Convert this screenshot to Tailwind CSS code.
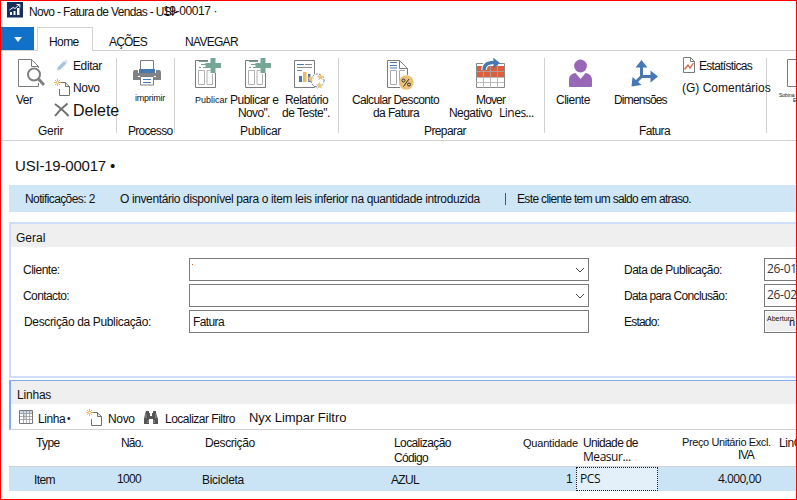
<!DOCTYPE html>
<html lang="pt">
<head>
<meta charset="utf-8">
<title>Novo - Fatura de Vendas</title>
<script src="https://cdn.jsdelivr.net/npm/@tailwindcss/browser@4"></script>
</head>
<body class="bg-white">
<svg width="0" height="0" class="hidden">
  <defs>
    <g id="post">
      <path d="M208 59.5H195.500V86.500H215.500V72" fill="none" stroke="#7c7c7c"/>
      <path d="M198.500 69.500h6v14h-6zM212.500 73v10.500h-5.500v-14h3" fill="none" stroke="#b0b0b0"/>
      <path d="M199 60.500h9M201 63.500h6M199 66.500h2M203 66.500h5" stroke="#6fa593"/>
      <path d="M210.500 57h5v5h5.500v5h-5.500v5h-5v-5h-5v-5h5z" fill="#74a795"/>
    </g>
    <g id="newdoc">
      <path d="M6 4.500H12L16.500 8.500V17.500H6.500V11M12.500 4.500V8.500H16.500" fill="none" stroke="#707070"/>
      <path d="M4.500 1v7M1 4.500h7M2 2l5 5M7 2L2 7" stroke="#e8a850" stroke-width=".9"/>
      <rect x="3.500" y="3.500" width="2" height="2" fill="#fff"/>
    </g>
    <path id="star" d="M0-3.800L1-1.200L3.700-1.100L1.600.6L2.300 3.200L0 1.700L-2.300 3.200L-1.600.6L-3.700-1.100L-1-1.200z" fill="#ebc178"/>
  </defs>
</svg>
<div class="flex h-[500px] w-[797px] flex-col overflow-hidden border border-[#ff0000] bg-white font-['Liberation_Sans',Arial,sans-serif] text-[12px] leading-[14px] whitespace-nowrap text-[#111]">

  <!-- title bar -->
  <header class="flex h-[26px] shrink-0 pl-[6px]">
    <svg class="mt-[1px] h-[16px] w-[16px] shrink-0" viewBox="0 0 16 16"><rect width="16" height="15.500" fill="#17305b"/><path d="M3 10h2v3H3zM6.500 9h2v4h-2zM10 6h2.500v7H10z" fill="#fff"/><path d="M2.500 8L6 5.500L8 6.500L12 3M9.500 2.500H12.800V5.500" fill="none" stroke="#fff"/></svg>
    <span class="mt-[4px] ml-[6px] w-[134px] tracking-[-0.67px]">Novo - Fatura de Vendas - USI-</span>
    <span class="mt-[3px] tracking-[-0.4px]">19-00017 ·</span>
  </header>

  <!-- tabs -->
  <nav class="flex h-[24px] shrink-0 border-b border-[#d2d2d2]">
    <div class="flex h-[23px] w-[33px] justify-center bg-[#1170c8] pt-[10px]"><svg class="h-[5px] w-[8px]" viewBox="0 0 8 5"><path d="M0 0h8L4 5z" fill="#e8f4ff"/></svg></div>
    <div class="ml-[3px] h-[24px] w-[56px] border-x border-t border-[#d2d2d2] bg-white pt-[7px] pl-[11px] tracking-[-0.6px]">Home</div>
    <div class="mt-[8px] ml-[16px] w-[76px] tracking-[-0.8px]">AÇÕES</div>
    <div class="mt-[8px] tracking-[-0.7px]">NAVEGAR</div>
  </nav>

  <!-- ribbon -->
  <section class="flex h-[90px] shrink-0 border-b border-[#d2d2d2] pt-[7px]">
    <div class="flex h-[75px] w-[116px] shrink-0 flex-col border-r border-[#d2d2d2]">
      <div class="flex h-[66px] shrink-0">
        <div class="w-[52px] shrink-0 pl-[15px]">
          <svg class="h-[30px] w-[30px]" viewBox="16 58 30 30"><path d="M38.500 68V66.500L31.500 59.500H18.500V86.500H38.500V83M31.500 59.500V66.500H38.500" fill="none" stroke="#7c7c7c"/><circle cx="34" cy="74.500" r="6" fill="#fff" stroke="#808080" stroke-width="2"/><path d="M38.500 79L44 85" stroke="#808080" stroke-width="3"/></svg>
          <div class="mt-[5px] tracking-[-0.5px]">Ver</div>
        </div>
        <div class="flex shrink-0 flex-col">
          <div class="flex h-[21px] pt-[1px]"><svg class="h-[16px] w-[20px] shrink-0" viewBox="53 59 20 16"><path d="M57 70.500L58 67L64 61L66.500 63.500L60.500 69.500z" fill="#a5c3e3"/><path d="M64.600 60.400L65.600 59.500L68 62L67 63z" fill="#c9dbee"/></svg><span class="tracking-[-0.4px]">Editar</span></div>
          <div class="flex h-[22px]"><svg class="h-[20px] w-[20px] shrink-0" viewBox="0 0 20 20"><use href="#newdoc" x="0" y="-1"/></svg><span class="mt-[2px] tracking-[-0.35px]">Novo</span></div>
          <div class="flex"><svg class="mt-[2px] h-[14px] w-[20px] shrink-0" viewBox="0 0 20 14"><path d="M2 1C6 4 12 9 15.500 13M14.500 .5C10 4 5 9 2 13" fill="none" stroke="#707070" stroke-width="2"/></svg><span class="text-[16px] leading-[20px]">Delete</span></div>
        </div>
      </div>
      <div class="pl-[37px] tracking-[-0.3px]">Gerir</div>
    </div>

    <div class="flex h-[75px] w-[58px] shrink-0 flex-col border-r border-[#d2d2d2]">
      <div class="h-[66px] shrink-0 pl-[15px]">
        <svg class="h-[28px] w-[30px]" viewBox="132 58 30 28"><path d="M140.500 69V60.500H153.500V69" fill="#fff" stroke="#7c7c7c"/><path d="M134 70h4v3h18v-3h4l1 2v7h-5v-3h-18v3h-5v-7z" fill="#808285"/><rect x="133" y="77" width="28" height="3" fill="#808285"/><rect x="139" y="69" width="16" height="4" fill="#4679b4"/><path d="M140.500 76.500h13v8.500h-13z" fill="#fff" stroke="#7c7c7c"/><path d="M143 79.500h8M143 82.500h8" stroke="#4679b4"/></svg>
        <div class="mt-[5px] ml-[3px] text-[9px] tracking-[-0.25px]">imprimir</div>
      </div>
      <div class="pl-[11px] tracking-[-0.7px]">Processo</div>
    </div>

    <div class="flex h-[75px] w-[164px] shrink-0 flex-col border-r border-[#d2d2d2]">
      <div class="flex h-[66px] shrink-0 pl-[19px] leading-[13px]">
        <div class="w-[36px] shrink-0">
          <svg class="h-[32px] w-[30px]" viewBox="194 57 30 32"><use href="#post"/></svg>
          <div class="mt-[4px] ml-[1px] text-[9px]">Publicar</div>
        </div>
        <div class="w-[52px] shrink-0">
          <svg class="ml-[14px] h-[32px] w-[30px]" viewBox="194 57 30 32"><use href="#post"/></svg>
          <div class="mt-[4px] tracking-[-0.5px]">Publicar e</div>
          <div class="ml-[8px] tracking-[-0.65px]">Novo".</div>
        </div>
        <div class="shrink-0">
          <svg class="ml-[11px] h-[32px] w-[32px]" viewBox="293 57 32 32"><path d="M314.500 73V59.500H294.500V86.500H314.500V84" fill="none" stroke="#7c7c7c"/><path d="M297 63.500h7" stroke="#4679b4"/><path d="M305 63.500h7M297 66.500h15M297 69.500h5" stroke="#8a8a8a"/><path d="M299 75h3v6h-3zM308 73h2.500v8H308z" fill="#3f78b5"/><path d="M303 71h3.500v10H303z" fill="#ebb864"/><circle cx="317.500" cy="79.500" r="6.500" fill="#fff" stroke="#4679b4" stroke-dasharray="2 1.500"/><use href="#star" x="310.500" y="77.500"/><use href="#star" x="320.500" y="76"/><use href="#star" x="319.500" y="84.500"/></svg>
          <div class="mt-[4px] ml-[3px] tracking-[-0.55px]">Relatório</div>
          <div class="tracking-[-0.5px]">de Teste".</div>
        </div>
      </div>
      <div class="pl-[65px] tracking-[-0.3px]">Publicar</div>
    </div>

    <div class="flex h-[75px] w-[206px] shrink-0 flex-col border-r border-[#d2d2d2]">
      <div class="flex h-[66px] shrink-0 pl-[13px] leading-[13px]">
        <div class="w-[97px] shrink-0">
          <svg class="ml-[34px] h-[32px] w-[30px]" viewBox="386 57 30 32"><path d="M407.500 74V67.500L399.500 59.500H387.500V86.500H400M399.500 59.500V67.500H407.500" fill="none" stroke="#7c7c7c"/><path d="M390.500 69.500h6v14h-6zM405 69.500h-5.500v14" fill="none" stroke="#a8a8a8"/><path d="M390 61.500h7M390 64.500h7M390 67h7" stroke="#4679b4"/><circle cx="406.300" cy="81.500" r="7.300" fill="#ebc177"/><path d="M409 78L403.500 85.500" stroke="#333"/><circle cx="403.500" cy="79.500" r="1.500" fill="none" stroke="#333"/><circle cx="409" cy="83.500" r="1.500" fill="none" stroke="#333"/></svg>
          <div class="mt-[4px] tracking-[-0.65px]">Calcular Desconto</div>
          <div class="ml-[21px] tracking-[-0.6px]">da Fatura</div>
        </div>
        <div class="shrink-0">
          <svg class="ml-[27px] h-[32px] w-[30px]" viewBox="477 57 30 32"><path d="M477.500 62.500h28v24h-28z" fill="#fff" stroke="#8a8a8a"/><rect x="478" y="65" width="27" height="11" fill="#d9603f"/><path d="M484.500 62v25M491.500 62v25M498.500 62v25M477 70.500h28M477 76.500h28M477 81.500h28" stroke="#aaa" stroke-width=".8"/><path d="M485 69C485 63 490 60.500 496 61.500" fill="none" stroke="#fff" stroke-width="5.500"/><path d="M485 69C485 63 490 61 496 61.500" fill="none" stroke="#4679b4" stroke-width="3.500"/><path d="M494 56.500L501 62L493.500 68L495 62z" fill="#4679b4"/></svg>
          <div class="mt-[4px] ml-[27px] tracking-[-0.85px]">Mover</div>
          <div class="flex"><span class="w-[50px] tracking-[-0.55px]">Negativo</span><span class="relative top-[-1px] font-['Open_Sans',sans-serif] tracking-[-0.5px]">Lines...</span></div>
        </div>
      </div>
      <div class="pl-[85px] tracking-[-0.6px]">Preparar</div>
    </div>

    <div class="flex h-[75px] w-[222px] shrink-0 flex-col border-r border-[#d2d2d2]">
      <div class="flex h-[66px] shrink-0 pl-[11px]">
        <div class="w-[58px] shrink-0">
          <svg class="ml-[12px] h-[30px] w-[28px]" viewBox="568 57 28 30"><circle cx="580.500" cy="65" r="6.400" fill="#9867b7"/><path d="M569 85V79C569 74.500 572 72.500 575.500 72L580.500 78L585.500 72C589 72.500 592 74.500 592 79V85Q592 86 591 86H570Q569 86 569 85z" fill="#9867b7"/></svg>
          <div class="mt-[5px] tracking-[-0.5px]">Cliente</div>
        </div>
        <div class="w-[68px] shrink-0">
          <svg class="ml-[16px] h-[30px] w-[30px]" viewBox="630 57 30 30"><path d="M641.500 62V75.500H654M641.500 75.500L634 83" fill="none" stroke="#4679b4" stroke-width="3"/><path d="M641.500 59L647.500 66.500H635.500zM658 75.500L650.500 69.500V81.500zM631.500 85.500L632.500 76L641.500 84z" fill="#4679b4"/></svg>
          <div class="mt-[5px] tracking-[-0.8px]">Dimensões</div>
        </div>
        <div class="shrink-0">
          <div class="flex h-[23px] pt-[1px]"><svg class="mt-[-2px] h-[17px] w-[17px] shrink-0" viewBox="682 57 17 17"><path d="M690.500 57.500H683.500V72.500H694.500V61.500zV61.500H694.500" fill="none" stroke="#7c7c7c"/><path d="M684.500 69.500L688 65L690 68L693.500 63" fill="none" stroke="#d9603f" stroke-width="1.300"/></svg><span class="tracking-[-0.7px]">Estatísticas</span></div>
          <div>(G) Comentários</div>
        </div>
      </div>
      <div class="pl-[94px] tracking-[-0.6px]">Fatura</div>
    </div>
    <div class="w-[29px] shrink-0 overflow-hidden pl-[12px]">
      <svg class="ml-[7px] h-[32px] w-[12px]" viewBox="786 58 12 32"><path d="M799 59.500H787.500V86.500H799" fill="none" stroke="#7c7c7c"/></svg>
      <div class="mt-[3px] text-[5px] leading-[5px]">Sobina</div>
      <div class="ml-[14px] text-[5px] leading-[5px]">E</div>
    </div>
  </section>

  <h1 class="flex h-[44px] shrink-0 pt-[16px] pl-[14px] text-[15px] leading-[18px] tracking-[-0.2px]">USI-19-00017 •</h1>

  <!-- notifications -->
  <section class="ml-[8px] flex h-[27px] shrink-0 bg-[#cfe6f6] pt-[7px]">
    <span class="ml-[16px] w-[95px] tracking-[-0.6px]">Notificações: 2</span>
    <span class="w-[385px] tracking-[-0.38px]">O inventário disponível para o item leis inferior na quantidade introduzida</span>
    <span class="mt-[1px] mr-[11px] h-[12px] w-px bg-[#555]"></span>
    <span class="tracking-[-0.65px]">Este cliente tem um saldo em atraso.</span>
  </section>

  <!-- general -->
  <section class="mt-[10px] ml-[8px] h-[156px] shrink-0 border-y-2 border-l-2 border-[#cfdef8]">
    <h2 class="h-[23px] bg-[#efefef] pt-[7px] pl-[5px]">Geral</h2>
    <div class="flex pt-[11px]">
      <div class="flex w-[178px] flex-col gap-[12px] pt-[5px] pl-[12px]">
        <label class="tracking-[-0.5px]">Cliente:</label>
        <label class="tracking-[-0.6px]">Contacto:</label>
        <label class="pl-px tracking-[-0.35px]">Descrição da Publicação:</label>
      </div>
      <div class="flex w-[400px] flex-col gap-[3px]">
        <div class="flex h-[23px] items-center justify-between border border-[#7a7a7a] pr-[3px]"><span class="mb-[10px] ml-[2px] h-px w-px bg-[#c86400]"></span><svg class="h-[6px] w-[10px]" viewBox="0 0 10 6"><path d="M1 1L5 5L9 1" fill="none" stroke="#444"/></svg></div>
        <div class="flex h-[23px] items-center justify-end border border-[#7a7a7a] pr-[3px]"><svg class="h-[6px] w-[10px]" viewBox="0 0 10 6"><path d="M1 1L5 5L9 1" fill="none" stroke="#444"/></svg></div>
        <div class="h-[23px] border border-[#7a7a7a] pt-[4px] pl-[3px] tracking-[-0.6px]">Fatura</div>
      </div>
      <div class="flex w-[175px] flex-col gap-[12px] pt-[5px] pl-[35px]">
        <label class="tracking-[-0.5px]">Data de Publicação:</label>
        <label class="tracking-[-0.65px]">Data para Conclusão:</label>
        <label class="tracking-[-0.8px]">Estado:</label>
      </div>
      <div class="flex w-[32px] flex-col gap-[3px] overflow-hidden">
        <div class="h-[23px] w-[60px] border border-[#7a7a7a] pt-[3px] pl-[2px] font-['Open_Sans',sans-serif] tracking-[-0.3px] text-[#333]">26-01</div>
        <div class="h-[23px] w-[60px] border border-[#7a7a7a] pt-[3px] pl-[2px] font-['Open_Sans',sans-serif] tracking-[-0.3px] text-[#333]">26-02</div>
        <div class="flex h-[23px] w-[60px] border border-[#7a7a7a] p-px"><div class="flex w-full bg-[#efefef]"><span class="ml-px w-[22px] text-[7px] leading-[14px]">Aberturo</span><span class="mt-[4px] text-[11px] leading-[12px]">n</span></div></div>
      </div>
    </div>
  </section>

  <!-- lines -->
  <section class="mt-[2px] ml-[8px] h-[50px] shrink-0 border-t border-l-2 border-[#84acf4] border-b border-b-[#d0d0d0]">
    <h2 class="h-[23px] bg-[#efefef] pt-[7px] pl-[6px] tracking-[-0.2px]">Linhas</h2>
    <div class="flex pt-[4px]">
      <svg class="mt-[2px] ml-[8px] h-[14px] w-[14px]" viewBox="0 0 14 14"><path d="M.5.5h13v13H.5z" fill="#fff" stroke="#777"/><path d="M1 1h12v3H1zM4 4h3v6H4z" fill="#c8d8e8"/><path d="M4.500 1v12M7.500 1v12M10.500 1v12M1 3.500h12M1 6.500h12M1 9.500h12" stroke="#999" stroke-width=".8"/></svg>
      <span class="mt-[4px] ml-[5px] w-[29px] tracking-[-0.4px]">Linha</span><span class="mt-[4px] w-[18px] text-[10px]">•</span>
      <svg class="mt-[1px] h-[20px] w-[20px] shrink-0" viewBox="0 0 20 20"><use href="#newdoc" x="0" y="-1"/></svg>
      <span class="mt-[4px] ml-[3px] w-[35px] tracking-[-0.35px]">Novo</span>
      <svg class="mt-[2px] h-[15px] w-[16px]" viewBox="0 0 16 15"><path d="M3 1h3v2h1v3h2V3h1V1h3v2l2 6v5h-5V9H6v5H1V9L2 4z" fill="#555"/><path d="M3 4v4M5 10v3M11 10v3M13 4v4" stroke="#aaa" stroke-width=".8"/></svg>
      <span class="mt-[4px] ml-[6px] w-[84px] tracking-[-0.5px]">Localizar Filtro</span>
      <span class="mt-[3px] text-[13px] tracking-[-0.05px]">Nyx Limpar Filtro</span>
    </div>
  </section>

  <div class="ml-[8px] grid h-[37px] shrink-0 grid-cols-[27px_85px_84px_189px_129px_60px_99px_97px_40px] border-b border-[#d0d0d0] pt-[6px]">
    <span></span>
    <span class="tracking-[-0.6px]">Type</span>
    <span class="tracking-[-0.8px]">Não.</span>
    <span class="tracking-[-0.4px]">Descrição</span>
    <span class="leading-[15px]"><span class="tracking-[-0.6px]">Localização</span><br><span class="tracking-[-0.65px]">Código</span></span>
    <span class="text-[11px] tracking-[-0.2px]">Quantidade</span>
    <span><span class="tracking-[-0.65px]">Unidade de</span><br><span class="font-['Open_Sans',sans-serif] tracking-[-0.45px]">Measur...</span></span>
    <span class="leading-[13px]"><span class="text-[11px] tracking-[-0.4px]">Preço Unitário Excl.</span><br><span class="ml-[56px] tracking-[-0.8px]">IVA</span></span>
    <span class="tracking-[-0.4px]">LinQ</span>
  </div>
  <div class="ml-[8px] grid h-[24px] shrink-0 grid-cols-[25px_83px_85px_189px_175px_9px_83px_60px_79px] bg-[#cbe4f5] pt-[6px]">
    <span></span>
    <span class="tracking-[-0.6px]">Item</span>
    <span class="mt-[-1px] tracking-[-0.65px]">1000</span>
    <span class="tracking-[-0.3px]">Bicicleta</span>
    <span class="tracking-[-0.7px]">AZUL</span>
    <span class="mt-[-1px]">1</span>
    <span class="mt-[-6px] ml-px h-[24px] border border-dotted border-[#222] bg-[#e4f0f9] pt-[4px] pl-[3px] font-['Open_Sans',sans-serif] tracking-[-0.4px]">PCS</span>
    <span></span>
    <span class="mt-[-1px] font-['Open_Sans',sans-serif] tracking-[-0.55px]">4.000,00</span>
  </div>
</div>
</body>
</html>
